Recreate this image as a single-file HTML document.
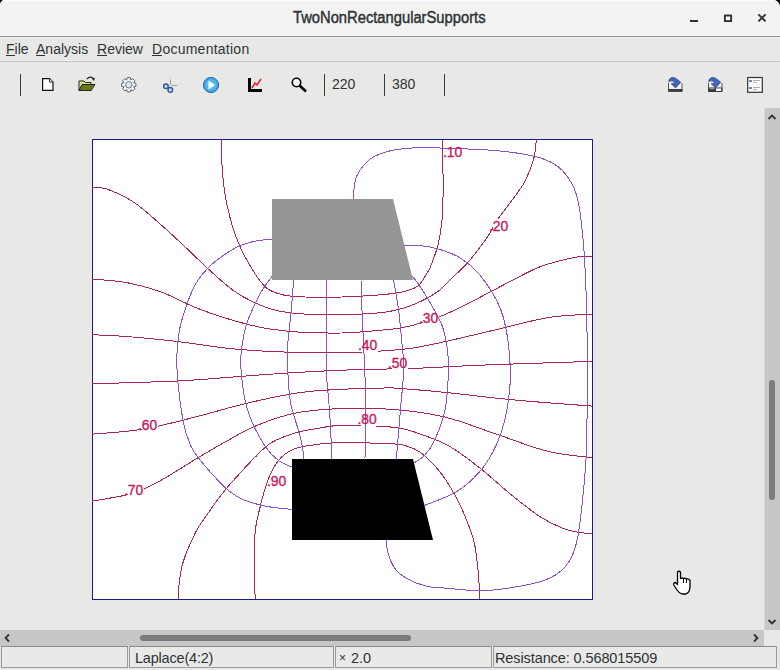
<!DOCTYPE html>
<html><head><meta charset="utf-8"><style>
html,body{margin:0;padding:0;width:780px;height:670px;overflow:hidden;background:#000;font-family:"Liberation Sans",sans-serif;}
#win{position:absolute;left:0;top:0;width:780px;height:670px;background:#e8e8e7;border-radius:5px 7px 0 0;overflow:hidden}
#title{position:absolute;left:0;top:0;width:780px;height:36px;background:#f3f3f3;border-bottom:1px solid #8e8e8e;box-shadow:inset 0 1px 0 #fbfbfb,inset 0 -2px 0 #f6f6f6}
#title .t{position:absolute;left:293px;top:9px;font-weight:normal;-webkit-text-stroke:0.45px #2e3436;font-size:16px;color:#2e3436;white-space:nowrap;transform-origin:0 0}
#menu{position:absolute;left:0;top:37px;width:780px;height:24px;background:#e8e8e7;border-bottom:1px solid #c6c6c5;box-shadow:inset 0 1px 0 #f0f0ef,inset 0 -1px 0 #efefee}
#menu span{position:absolute;top:3.5px;font-size:14px;color:#2e3436;white-space:nowrap}
#menu u{text-decoration:none;border-bottom:1px solid #2e3436;display:inline-block;line-height:12.5px}
.sep{position:absolute;top:74px;width:1px;height:22px;background:#3a3a3a}
.tb{position:absolute;font-size:14px;color:#2e3436;top:76px}
#vs{position:absolute;left:764px;top:108px;width:16px;height:522px;background:#c6c7c6;border-left:1px solid #d8d8d8;box-sizing:border-box}
#vthumb{position:absolute;left:769px;top:380px;width:6px;height:120px;background:#7b7c7c;border-radius:3px}
#hs{position:absolute;left:0;top:630px;width:764px;height:16px;background:#c6c7c6}
#hthumb{position:absolute;left:140px;top:635px;width:271px;height:6px;background:#7b7c7c;border-radius:3px}
#corner{position:absolute;left:764px;top:630px;width:16px;height:16px;background:#e8e8e7}
#status{position:absolute;left:0;top:646px;width:780px;height:24px;background:#e8e8e7}
.panel{position:absolute;top:646px;height:22px;border:1px solid #9a9a9a;border-top-color:#8a8a8a;box-sizing:border-box;background:#e9e9e8;font-size:14px;color:#2e3436;white-space:nowrap}
.panel span{position:absolute;left:5px;top:2.5px;font-size:14.5px}
#plot{position:absolute;left:0;top:0}
</style></head><body><div id="win">
<div id="title"><div class="t" style="transform:scale(0.921,1)">TwoNonRectangularSupports</div>
<svg style="position:absolute;left:0;top:0" width="780" height="36">
<rect x="690" y="20" width="8" height="2" fill="#2e3436"/>
<rect x="724.9" y="15.5" width="6.2" height="5.6" fill="none" stroke="#2e3436" stroke-width="1.9"/>
<path d="M758.4,14.4 L765.6,21.4 M765.6,14.4 L758.4,21.4" stroke="#2e3436" stroke-width="2"/>
</svg></div>
<div id="menu">
<span style="left:6px"><u>F</u>ile</span>
<span style="left:36px"><u>A</u>nalysis</span>
<span style="left:97px"><u>R</u>eview</span>
<span style="left:152px;letter-spacing:0.25px"><u>D</u>ocumentation</span>
</div>
<div class="sep" style="left:20px"></div>
<div class="sep" style="left:324px"></div>
<div class="sep" style="left:384px"></div>
<div class="sep" style="left:444px"></div>
<div class="tb" style="left:332px">220</div>
<div class="tb" style="left:392px">380</div>
<svg style="position:absolute;left:0;top:62px" width="780" height="45">
<!-- new page -->
<path d="M42.6,16.6 H49.5 L53,20.1 V28.3 H42.6 Z" fill="#fff" stroke="#111" stroke-width="1.2"/>
<path d="M49.5,16.6 V20.1 H53" fill="#ddd" stroke="#111" stroke-width="0.8"/>
<!-- open folder -->
<path d="M79,19 H84 L85.5,20.5 H91 V28.5 H79 Z" fill="#e6e68a" stroke="#222" stroke-width="1"/>
<path d="M79,28.5 L82,22.5 H95 L91,28.5 Z" fill="#6a7a18" stroke="#222" stroke-width="1"/>
<path d="M86.8,17.2 Q90,13.6 93.2,16.4" fill="none" stroke="#222" stroke-width="1.1"/>
<path d="M91.6,16.6 L95,15.8 L94,19 Z" fill="#222"/>
<!-- gear -->
<g transform="translate(128.8,22.8)">
<path d="M-2.20,-4.93 L-1.45,-7.15 L1.45,-7.15 L2.20,-4.93 L1.93,-5.04 L4.03,-6.08 L6.08,-4.03 L5.04,-1.93 L4.93,-2.20 L7.15,-1.45 L7.15,1.45 L4.93,2.20 L5.04,1.93 L6.08,4.03 L4.03,6.08 L1.93,5.04 L2.20,4.93 L1.45,7.15 L-1.45,7.15 L-2.20,4.93 L-1.93,5.04 L-4.03,6.08 L-6.08,4.03 L-5.04,1.93 L-4.93,2.20 L-7.15,1.45 L-7.15,-1.45 L-4.93,-2.20 L-5.04,-1.93 L-6.08,-4.03 L-4.03,-6.08 L-1.93,-5.04 Z" fill="#eef2f6" stroke="#5b6570" stroke-width="1"/>
<circle r="3.2" fill="#dde8f4" stroke="#6a7888" stroke-width="1"/>
</g>
<!-- scissors -->
<g transform="translate(0,-62)">
<path d="M170.5,79.5 V85 M171.5,85.3 L177,85.6" stroke="#9aa0a8" stroke-width="1"/>
<path d="M170.2,75.5 L170.5,79.5 M177,85.6 L179,84" stroke="#d0d4d8" stroke-width="0.8"/>
<circle cx="165.9" cy="86.2" r="2.3" fill="#cfe0ff" stroke="#34589a" stroke-width="1.5"/>
<circle cx="170.3" cy="89.9" r="2.3" fill="#cfe0ff" stroke="#34589a" stroke-width="1.5"/>
</g>
<!-- play -->
<circle cx="211" cy="23" r="7.6" fill="#3a9ee0" stroke="#2a6ab0" stroke-width="1"/>
<circle cx="211" cy="23" r="6" fill="#56b6ee"/>
<path d="M208.5,18.5 L215,23 L208.5,27.5 Z" fill="#fff"/>
<!-- chart -->
<path d="M249.5,16 V28.5 H262" fill="none" stroke="#000" stroke-width="3"/>
<path d="M252,26 L255,21 L257,23 L261,17" fill="none" stroke="#e02030" stroke-width="1.5"/>
<!-- magnifier -->
<circle cx="296.5" cy="20.5" r="4.2" fill="#fff" stroke="#000" stroke-width="1.6"/>
<path d="M299.5,23.5 L306,29.5" stroke="#000" stroke-width="2.6"/>
<!-- save icons -->
<g transform="translate(0,-62)">
<path d="M668.5,83 V91.2 H682 V83" fill="#f2f2f2" stroke="#555" stroke-width="1"/>
<rect x="668" y="89" width="14.5" height="2.8" rx="0.8" fill="#3a3a3a"/>
<path d="M668.8,81.8 C668.6,77.2 673.8,76.4 677.2,79.4 L680.8,82.2 L675.6,88 L671.2,83.8 L674.6,83.2 C673.4,80.6 671,80.2 668.8,81.8 Z" fill="#3d68b4" stroke="#22428a" stroke-width="0.7"/>
</g>
<g transform="translate(0,-62)">
<path d="M708.5,83 V91.2 H722 V83" fill="#f2f2f2" stroke="#555" stroke-width="1"/>
<rect x="708" y="87.4" width="14.5" height="4.6" rx="1" fill="#3a3a3a"/>
<rect x="716" y="88.4" width="5.2" height="2.6" fill="#f4f8ee"/>
<rect x="709.5" y="88.4" width="5" height="0.8" fill="#cfcfcf"/>
<path d="M708.8,81.8 C708.6,77.2 713.8,76.4 717.2,79.4 L720.8,82.2 L715.6,88 L711.2,83.8 L714.6,83.2 C713.4,80.6 711,80.2 708.8,81.8 Z" fill="#3d68b4" stroke="#22428a" stroke-width="0.7"/>
</g>
<g transform="translate(0,-62)">
<rect x="747.7" y="77.5" width="14.6" height="14.8" fill="#fbfbfb" stroke="#333" stroke-width="1.2"/>
<rect x="749.2" y="80.1" width="2.7" height="1.9" fill="#5a78a8"/>
<rect x="749.2" y="87.1" width="2.7" height="1.9" fill="#5a78a8"/>
<path d="M753,80.5 H760 M753,82.6 H757 M753,87.5 H760 M753,89.6 H757" stroke="#9a9a9a" stroke-width="0.8"/>
</g>
</svg>
<div id="vs"></div>
<svg style="position:absolute;left:764px;top:107px" width="16" height="523">
<path d="M4.5,12 L8,8.5 L11.5,12" fill="none" stroke="#2e3436" stroke-width="1.8"/>
<path d="M4.5,513 L8,516.5 L11.5,513" fill="none" stroke="#2e3436" stroke-width="1.8"/>
</svg>
<div id="vthumb"></div>
<div id="hs"></div>
<svg style="position:absolute;left:0;top:630px" width="764" height="16">
<path d="M9,4.5 L5.5,8 L9,11.5" fill="none" stroke="#2e3436" stroke-width="1.8"/>
<path d="M754,4.5 L757.5,8 L754,11.5" fill="none" stroke="#2e3436" stroke-width="1.8"/>
</svg>
<div id="hthumb"></div>
<div id="corner"></div>
<div id="status"></div>
<div class="panel" style="left:1px;width:127px"></div>
<div class="panel" style="left:129px;width:205px"><span style="left:5px;letter-spacing:-0.2px">Laplace(4:2)</span></div>
<div class="panel" style="left:335px;width:157px"><span style="left:3px"><b style="font-weight:normal;font-size:12px;position:relative;top:-1px;margin-right:5px">×</b>2.0</span></div>
<div class="panel" style="left:493px;width:284px"><span style="left:1px;letter-spacing:-0.1px">Resistance: 0.568015509</span></div>
<svg id="plot" width="780" height="670">
<rect x="92.5" y="139.5" width="500" height="460" fill="#fff" stroke="#1a1a8c" stroke-width="1"/>
<path d="M272,199 H393 L413,280 H272 Z" fill="#969696"/>
<path d="M292,459 H413 L433,540 H292 Z" fill="#000"/>
<g fill="none" stroke-width="1" shape-rendering="crispEdges">
<path d="M221.5,139.0 C221.7,144.7 221.5,161.9 222.5,173.3 C223.5,184.8 225.0,196.2 227.6,207.7 C230.2,219.1 233.7,231.4 238.0,242.0 C242.3,252.6 248.6,263.5 253.4,271.2 C258.2,278.9 262.0,284.4 267.1,288.4 C272.2,292.4 278.0,293.8 284.3,295.2 C290.6,296.6 295.4,296.7 305.0,297.0 C314.6,297.3 330.1,297.3 342.0,297.0 C353.9,296.7 367.5,295.8 376.3,295.2 C385.1,294.6 390.0,293.9 395.0,293.2 C400.0,292.5 402.3,292.3 406.2,291.0 C410.1,289.7 414.8,288.8 418.5,285.4 C422.2,282.0 425.9,275.4 428.6,270.5 C431.3,265.6 432.8,260.7 434.5,256.0 C436.2,251.3 437.3,248.5 438.6,242.4 C439.9,236.3 441.3,229.0 442.1,219.4 C442.9,209.8 443.1,194.9 443.2,185.0 C443.3,175.1 442.7,167.7 442.5,160.0 C442.3,152.3 442.1,142.5 442.0,139.0" stroke="#aa2260"/>
<path d="M92.0,187.0 C94.8,187.5 101.6,186.9 109.0,189.8 C116.4,192.7 125.7,196.3 136.6,204.2 C147.5,212.0 162.4,226.0 174.4,236.9 C186.4,247.8 199.1,260.6 208.8,269.5 C218.5,278.4 225.4,284.7 232.8,290.1 C240.2,295.5 246.0,298.7 253.4,302.1 C260.8,305.5 268.8,308.7 277.4,310.7 C286.0,312.7 294.2,313.4 305.0,314.1 C315.8,314.8 329.0,315.1 342.0,314.8 C355.0,314.5 371.9,313.9 383.2,312.4 C394.5,310.9 400.9,309.4 410.0,306.0 C419.1,302.6 430.5,296.5 437.5,291.8 C444.5,287.1 447.0,282.8 452.0,278.0 C457.0,273.2 462.6,268.3 467.4,263.0 C472.2,257.7 477.2,251.0 481.0,246.0 C484.8,241.0 487.3,237.3 490.0,233.0 C492.7,228.7 494.2,224.8 497.4,220.0 C500.6,215.2 504.6,210.2 509.0,204.2 C513.4,198.2 519.9,189.9 523.5,183.9 C527.1,177.9 528.9,172.6 530.7,168.0 C532.5,163.4 533.3,161.2 534.3,156.4 C535.3,151.6 536.1,141.9 536.5,139.0" stroke="#aa2260"/>
<path d="M92.0,279.1 C97.7,279.7 114.8,280.4 126.3,282.5 C137.8,284.6 149.2,287.7 160.7,291.8 C172.1,295.9 183.6,302.7 195.0,307.3 C206.4,311.9 218.0,315.9 229.4,319.3 C240.8,322.7 252.3,325.8 263.7,327.9 C275.1,330.0 284.9,331.1 298.0,332.0 C311.1,332.9 328.9,333.2 342.0,333.0 C355.1,332.8 366.6,331.4 376.3,330.6 C386.0,329.8 392.9,329.3 400.0,328.1 C407.1,326.9 412.8,325.3 419.2,323.5 C425.6,321.7 431.0,320.2 438.5,317.2 C446.0,314.2 455.6,309.8 464.1,305.6 C472.6,301.4 481.2,296.6 489.7,292.2 C498.2,287.8 506.5,283.3 515.0,279.0 C523.5,274.7 530.9,270.1 540.9,266.5 C550.9,262.9 566.8,259.0 575.3,257.3 C583.8,255.6 589.2,256.6 592.0,256.5" stroke="#aa2260"/>
<path d="M92.0,334.7 C97.7,335.0 112.0,335.4 126.3,336.5 C140.6,337.6 160.7,339.6 177.9,341.6 C195.1,343.6 212.2,346.8 229.4,348.5 C246.6,350.2 262.1,351.2 280.9,351.9 C299.7,352.6 321.5,353.1 342.0,352.6 C362.5,352.2 386.6,351.0 403.8,349.2 C421.0,347.4 429.6,344.9 445.0,341.6 C460.4,338.3 479.3,333.6 496.5,329.6 C513.7,325.6 532.1,320.2 548.0,317.6 C563.9,315.0 584.7,314.7 592.0,314.1" stroke="#aa2260"/>
<path d="M92.0,383.3 C98.5,383.2 120.3,383.1 131.0,382.8 C141.7,382.6 146.2,382.2 156.0,381.8 C165.8,381.4 172.8,381.4 190.0,380.3 C207.2,379.2 240.7,376.3 259.0,375.0 C277.3,373.7 286.2,373.1 300.0,372.3 C313.8,371.5 328.7,370.7 342.0,370.2 C355.3,369.7 366.0,369.6 380.0,369.2 C394.0,368.8 409.4,368.6 426.0,367.9 C442.6,367.2 451.7,366.3 479.4,365.2 C507.1,364.1 573.2,362.0 592.0,361.4" stroke="#aa2260"/>
<path d="M92.0,434.2 C100.6,433.4 126.3,432.0 143.5,429.1 C160.7,426.2 177.8,421.4 195.0,417.1 C212.2,412.8 229.0,407.4 246.5,403.3 C264.0,399.2 284.1,394.9 300.0,392.6 C315.9,390.3 328.7,390.0 342.0,389.3 C355.3,388.6 371.4,388.4 380.0,388.2 C388.6,388.0 382.7,387.3 393.5,388.0 C404.3,388.7 425.0,390.4 445.0,392.4 C465.0,394.4 489.2,397.6 513.7,399.9 C538.2,402.2 579.0,405.1 592.0,406.1" stroke="#aa2260"/>
<path d="M92.0,501.1 C97.7,500.1 117.5,497.1 126.3,495.0 C135.1,492.9 138.9,491.0 144.6,488.6 C150.3,486.2 156.1,483.0 160.7,480.5 C165.3,478.0 165.5,477.8 172.4,473.6 C179.3,469.4 190.9,461.9 201.9,455.4 C212.9,448.9 229.6,439.4 238.4,434.5 C247.2,429.6 248.0,429.2 254.8,426.3 C261.7,423.4 271.3,419.7 279.5,417.2 C287.7,414.7 293.7,412.9 304.1,411.5 C314.5,410.1 327.1,408.8 342.0,408.5 C356.9,408.2 376.3,408.1 393.5,409.5 C410.7,410.9 427.8,413.0 445.0,417.1 C462.2,421.2 479.3,428.5 496.5,434.2 C513.7,439.9 532.1,447.5 548.0,451.4 C563.9,455.3 584.7,456.6 592.0,457.6" stroke="#aa2260"/>
<path d="M178.1,599.0 C178.2,596.7 178.4,590.2 179.0,585.0 C179.6,579.8 180.5,572.8 181.6,567.8 C182.7,562.8 184.0,559.2 185.5,555.0 C187.0,550.8 188.7,547.0 190.8,542.5 C192.9,538.0 195.3,532.6 198.0,528.0 C200.7,523.4 203.9,519.2 206.9,514.9 C209.9,510.6 212.8,506.4 216.0,502.0 C219.2,497.6 222.1,493.7 226.4,488.5 C230.7,483.3 237.3,476.2 242.0,471.0 C246.7,465.8 249.9,462.2 254.8,457.5 C259.7,452.8 264.5,446.8 271.3,442.7 C278.1,438.6 287.7,435.3 295.9,432.8 C304.1,430.3 312.8,429.1 320.5,427.9 C328.2,426.7 329.6,425.6 342.0,425.5 C354.4,425.4 382.0,426.0 395.0,427.4 C408.0,428.8 411.0,430.9 420.0,434.0 C429.0,437.1 438.8,440.2 449.0,446.0 C459.2,451.8 470.4,460.6 481.1,469.0 C491.8,477.4 503.3,488.5 513.3,496.5 C523.3,504.5 532.5,511.8 540.9,517.2 C549.3,522.6 557.3,526.2 563.8,528.7 C570.3,531.2 575.3,531.7 580.0,532.5 C584.7,533.3 590.0,533.3 592.0,533.5" stroke="#aa2260"/>
<path d="M255.2,599.0 C255.0,594.1 254.5,578.6 254.3,569.6 C254.2,560.6 254.0,552.5 254.3,545.0 C254.6,537.5 255.1,531.4 256.1,524.8 C257.2,518.1 259.2,510.9 260.6,505.1 C262.0,499.3 262.9,495.5 264.7,490.0 C266.5,484.5 268.6,477.6 271.3,472.2 C274.0,466.8 277.0,461.5 281.1,457.5 C285.2,453.5 289.3,450.6 295.9,448.4 C302.5,446.1 312.8,444.9 320.5,444.0 C328.2,443.1 329.8,442.7 342.0,442.7 C354.2,442.7 382.5,443.3 393.5,443.9 C404.5,444.5 403.6,445.1 408.0,446.5 C412.4,447.9 415.8,449.2 420.0,452.2 C424.2,455.2 429.7,460.5 433.4,464.3 C437.1,468.1 439.7,471.5 442.4,475.1 C445.1,478.7 446.8,481.3 449.5,485.8 C452.2,490.3 455.7,496.3 458.5,501.9 C461.3,507.5 463.6,512.4 466.2,519.2 C468.8,526.0 472.2,534.0 474.2,542.5 C476.2,551.0 477.0,560.6 478.0,570.0 C479.0,579.4 479.7,594.2 480.0,599.0" stroke="#aa2260"/>
<rect x="446.5" y="145" width="16.5" height="14" fill="#fff" stroke="none"/>
<rect x="492.5" y="219" width="16.5" height="14" fill="#fff" stroke="none"/>
<rect x="422.5" y="310.5" width="16.5" height="14" fill="#fff" stroke="none"/>
<rect x="361.5" y="337.5" width="16.5" height="14" fill="#fff" stroke="none"/>
<rect x="391.5" y="356" width="16.5" height="14" fill="#fff" stroke="none"/>
<rect x="141.5" y="418" width="16.5" height="14" fill="#fff" stroke="none"/>
<rect x="127.5" y="483" width="16.5" height="14" fill="#fff" stroke="none"/>
<rect x="361.0" y="412" width="16.5" height="14" fill="#fff" stroke="none"/>
<rect x="270.5" y="474" width="16.5" height="14" fill="#fff" stroke="none"/>
<path d="M272.0,239.1 C269.1,239.4 260.1,240.0 254.6,241.2 C249.1,242.4 244.2,243.8 239.0,246.2 C233.8,248.5 228.8,251.7 223.6,255.3 C218.4,258.9 212.7,263.2 208.0,268.0 C203.3,272.8 198.9,278.2 195.4,284.2 C191.9,290.2 189.5,297.2 187.0,304.0 C184.5,310.8 182.0,318.7 180.5,325.0 C179.0,331.3 178.5,334.7 177.9,342.0 C177.3,349.3 176.2,355.9 177.0,369.0 C177.8,382.1 180.7,407.7 183.0,420.5 C185.3,433.3 188.0,439.4 190.8,446.0 C193.6,452.6 196.2,454.8 200.0,459.8 C203.8,464.8 209.2,470.9 213.8,475.9 C218.4,480.9 222.9,485.8 227.5,489.6 C232.1,493.4 235.8,496.2 241.3,498.8 C246.8,501.4 254.9,503.6 260.6,505.1 C266.4,506.6 270.5,507.1 275.8,507.8 C281.1,508.5 289.7,509.1 292.5,509.4" stroke="#9050c8"/>
<path d="M272.0,276.4 C270.1,279.2 264.6,285.5 260.3,293.5 C256.1,301.5 249.7,314.7 246.5,324.4 C243.3,334.1 242.2,344.5 241.3,351.9 C240.4,359.3 240.4,361.0 241.0,369.0 C241.6,377.0 243.0,390.7 245.0,400.0 C247.0,409.3 249.8,416.8 253.2,424.6 C256.6,432.4 261.4,440.9 265.5,446.8 C269.6,452.7 273.3,456.6 277.8,460.0 C282.3,463.4 289.9,466.1 292.3,467.3" stroke="#9050c8"/>
<path d="M293.6,279.8 C293.2,284.9 292.2,299.8 291.2,310.7 C290.2,321.6 288.3,335.3 287.7,345.0 C287.1,354.7 287.3,359.8 287.7,369.0 C288.1,378.2 289.0,392.1 290.1,400.0 C291.2,407.9 292.7,410.9 294.2,416.4 C295.7,421.9 297.8,427.6 299.2,432.8 C300.6,438.0 301.7,443.2 302.5,447.6 C303.3,452.0 303.6,457.2 303.8,459.1" stroke="#9050c8"/>
<path d="M326.5,279.8 C326.5,294.7 326.1,349.0 326.5,369.0 C326.9,389.0 328.1,390.7 328.7,400.0 C329.3,409.3 329.8,414.8 330.4,424.6 C330.9,434.5 331.7,453.4 332.0,459.1" stroke="#9050c8"/>
<path d="M361.0,280.0 C361.2,285.2 361.5,299.3 362.0,311.0 C362.5,322.7 363.4,341.5 363.8,350.0 C364.2,358.5 364.4,355.3 364.6,362.0 C364.9,368.7 365.1,381.2 365.3,390.0 C365.5,398.8 365.7,403.4 365.6,415.0 C365.6,426.6 365.1,451.9 365.0,459.3" stroke="#9050c8"/>
<path d="M393.5,279.8 C394.4,284.9 397.3,299.8 398.7,310.7 C400.1,321.6 401.2,335.3 402.1,345.0 C403.0,354.7 404.1,358.1 403.8,369.0 C403.5,379.9 401.6,395.1 400.4,410.2 C399.1,425.2 397.0,451.1 396.3,459.3" stroke="#9050c8"/>
<path d="M412.5,276.5 C413.5,277.8 415.8,280.4 418.5,284.3 C421.2,288.2 424.8,293.3 428.6,300.0 C432.5,306.7 438.6,316.9 441.6,324.4 C444.6,331.9 445.6,337.6 446.7,345.0 C447.8,352.4 448.8,358.1 448.5,369.0 C448.2,379.9 447.3,398.4 445.0,410.2 C442.7,422.0 438.1,432.5 434.7,440.0 C431.3,447.5 428.1,451.6 424.6,455.4 C421.1,459.2 415.6,461.7 413.8,463.0" stroke="#9050c8"/>
<path d="M403.8,245.5 C408.4,245.8 421.6,244.9 431.3,247.2 C441.0,249.5 453.1,253.2 462.2,259.2 C471.3,265.2 479.3,273.5 486.2,283.2 C493.1,292.9 499.4,303.3 503.4,317.6 C507.4,331.9 509.7,353.6 510.3,369.0 C510.9,384.4 509.1,397.6 506.8,410.2 C504.5,422.8 501.1,434.2 496.5,444.5 C491.9,454.8 486.2,464.1 479.4,472.0 C472.6,479.9 465.1,486.4 455.9,492.0 C446.7,497.6 429.6,503.2 424.4,505.5" stroke="#9050c8"/>
<path d="M353.5,199.0 C353.6,197.1 353.6,191.5 354.1,187.7 C354.6,183.9 355.2,179.8 356.7,176.2 C358.2,172.6 360.3,169.1 363.1,165.9 C365.9,162.7 369.0,159.4 373.3,157.0 C377.6,154.6 383.6,152.6 388.7,151.2 C393.8,149.8 398.6,149.2 404.1,148.6 C409.7,148.0 416.0,147.8 422.0,147.7 C428.0,147.6 427.9,147.5 440.0,148.0 C452.1,148.5 479.2,149.1 494.9,150.5 C510.6,151.9 524.0,153.9 534.0,156.2 C544.0,158.5 548.9,160.7 554.6,164.3 C560.3,167.9 564.6,172.3 568.4,178.0 C572.2,183.7 575.3,189.9 577.6,198.7 C579.9,207.5 581.1,220.9 582.2,230.9 C583.4,240.9 583.9,248.2 584.5,258.5 C585.1,268.8 585.6,274.5 586.1,292.9 C586.6,311.3 587.4,347.8 587.5,369.0 C587.6,390.2 587.2,405.2 587.0,420.0 C586.8,434.8 586.9,443.6 586.1,457.5 C585.3,471.4 583.6,490.0 582.2,503.4 C580.8,516.8 579.5,528.7 577.6,537.9 C575.7,547.1 573.8,552.9 570.7,558.6 C567.6,564.4 564.2,568.6 559.2,572.4 C554.2,576.2 549.7,578.8 540.9,581.5 C532.1,584.2 516.8,586.9 506.4,588.4 C496.0,589.9 488.4,590.7 478.8,590.7 C469.2,590.7 457.8,589.2 449.0,588.4 C440.2,587.6 433.2,587.8 426.0,586.1 C418.8,584.4 411.2,581.0 406.0,578.0 C400.8,575.0 397.6,572.2 394.5,567.8 C391.4,563.4 388.9,556.4 387.6,551.7 C386.3,547.0 386.7,541.7 386.5,539.7" stroke="#9050c8"/>
</g>
<g font-family="Liberation Sans" font-size="15.3" fill="#c8145a" stroke="#c8145a" stroke-width="0.35">
<text x="443" y="157" textLength="19.3" lengthAdjust="spacingAndGlyphs">.10</text>
<text x="489" y="231" textLength="19.3" lengthAdjust="spacingAndGlyphs">.20</text>
<text x="419" y="322.5" textLength="19.3" lengthAdjust="spacingAndGlyphs">.30</text>
<text x="358" y="349.5" textLength="19.3" lengthAdjust="spacingAndGlyphs">.40</text>
<text x="388" y="368" textLength="19.3" lengthAdjust="spacingAndGlyphs">.50</text>
<text x="138" y="430" textLength="19.3" lengthAdjust="spacingAndGlyphs">.60</text>
<text x="124" y="495" textLength="19.3" lengthAdjust="spacingAndGlyphs">.70</text>
<text x="357.5" y="424" textLength="19.3" lengthAdjust="spacingAndGlyphs">.80</text>
<text x="267" y="486" textLength="19.3" lengthAdjust="spacingAndGlyphs">.90</text>
</g>
<!-- hand cursor -->
<g transform="translate(673,571)">
<path d="M4.5,1 Q6,-0.5 7.5,1 V7.5 Q9,6.5 10.5,7.5 Q12,6.8 13.5,8 Q15.5,7.5 17,9.5 V16 Q17,21 13,23 H9 Q6,22 4,19 L0.8,14 Q0.3,11.5 2.5,11.5 L4.5,13.5 Z" fill="#fff" stroke="#000" stroke-width="1.3" stroke-linejoin="round"/>
<path d="M10.5,7.5 V12 M13.5,8 V12" stroke="#000" stroke-width="1"/>
</g>
</svg>
</div></body></html>
